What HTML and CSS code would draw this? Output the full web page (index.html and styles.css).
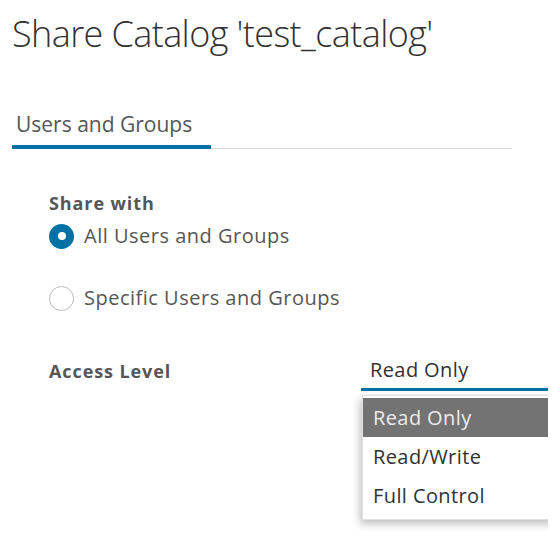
FILE: index.html
```html
<!DOCTYPE html>
<html lang="en">
<head>
<meta charset="utf-8">
<title>Share Catalog</title>
<link rel="stylesheet" href="styles.css">
</head>
<body>
<div class="page">
  <h1 class="title">Share Catalog 'test_catalog'</h1>
  <div class="tabs">
    <div class="tab active">Users and Groups</div>
  </div>
  <div class="form">
    <div class="label">Share with</div>
    <div class="radio-row">
      <span class="radio checked"></span>
      <span class="radio-text">All Users and Groups</span>
    </div>
    <div class="radio-row second">
      <span class="radio"></span>
      <span class="radio-text">Specific Users and Groups</span>
    </div>
    <div class="access-row">
      <div class="label access-label">Access Level</div>
      <div class="select-wrap">
        <div class="select">Read Only</div>
        <ul class="dropdown">
          <li class="option selected">Read Only</li>
          <li class="option">Read/Write</li>
          <li class="option">Full Control</li>
        </ul>
      </div>
    </div>
  </div>
</div>
</body>
</html>
```

FILE: styles.css
```css
html, body {
  margin: 0;
  padding: 0;
  background: #ffffff;
}
body {
  font-family: "Open Sans", "Liberation Sans", sans-serif;
  color: #565656;
}
.page {
  width: 560px;
  height: 547px;
  overflow: hidden;
}
.title {
  margin: 0;
  padding: 12px 0 0 12px;
  font-size: 36px;
  line-height: 44px;
  font-weight: 300;
  color: #313131;
  letter-spacing: -0.6px;
}
.tabs {
  margin: 53px 0 0 12px;
  width: 500px;
  border-bottom: 1px solid #d8d8d8;
  display: flex;
}
.tab {
  padding: 0 19px 6px 4px;
  font-size: 21px;
  line-height: 30px;
  color: #565656;
  border-bottom: 4px solid transparent;
  margin-bottom: -1px;
}
.tab.active {
  border-bottom-color: #0072a3;
}
.form {
  padding: 43px 0 0 49px;
}
.label {
  font-size: 18px;
  font-weight: 700;
  line-height: 22px;
  letter-spacing: 0.9px;
  color: #565656;
}
.radio-row {
  display: flex;
  align-items: center;
  gap: 10px;
  margin-top: 8px;
  height: 28px;
}
.radio-row.second {
  margin-top: 34px;
}
.radio {
  width: 25px;
  height: 25px;
  flex: none;
  box-sizing: border-box;
  border-radius: 50%;
  border: 1.5px solid #bdbdbd;
  background: #fff;
  display: flex;
  align-items: center;
  justify-content: center;
}
.radio.checked {
  border: none;
  background: #0072a3;
}
.radio.checked::after {
  content: "";
  width: 8px;
  height: 8px;
  border-radius: 50%;
  background: #fff;
}
.radio-text {
  font-size: 20px;
  line-height: 28px;
  letter-spacing: 0.5px;
  color: #565656;
}
.access-row {
  display: flex;
  margin-top: 48px;
}
.access-label {
  width: 312px;
}
.select-wrap {
  position: relative;
  width: 187px;
}
.select {
  margin-top: -3px;
  padding: 0 0 5px 9px;
  font-size: 20px;
  line-height: 26px;
  letter-spacing: 0.4px;
  color: #313131;
  border-bottom: 3px solid #0072a3;
}
.dropdown {
  position: absolute;
  left: 1px;
  top: 35px;
  width: 220px;
  margin: 0;
  padding: 2px 0 4px;
  list-style: none;
  background: #fff;
  border: 1px solid #e0e0e0;
  box-shadow: -2px 4px 8px rgba(0, 0, 0, 0.25);
  clip-path: inset(-20px 36px -20px -20px);
}
.option {
  padding: 0 10px;
  height: 39px;
  line-height: 39px;
  font-size: 20px;
  letter-spacing: 0.4px;
  color: #313131;
}
.option.selected {
  background: #737373;
  color: #ececec;
}
```
